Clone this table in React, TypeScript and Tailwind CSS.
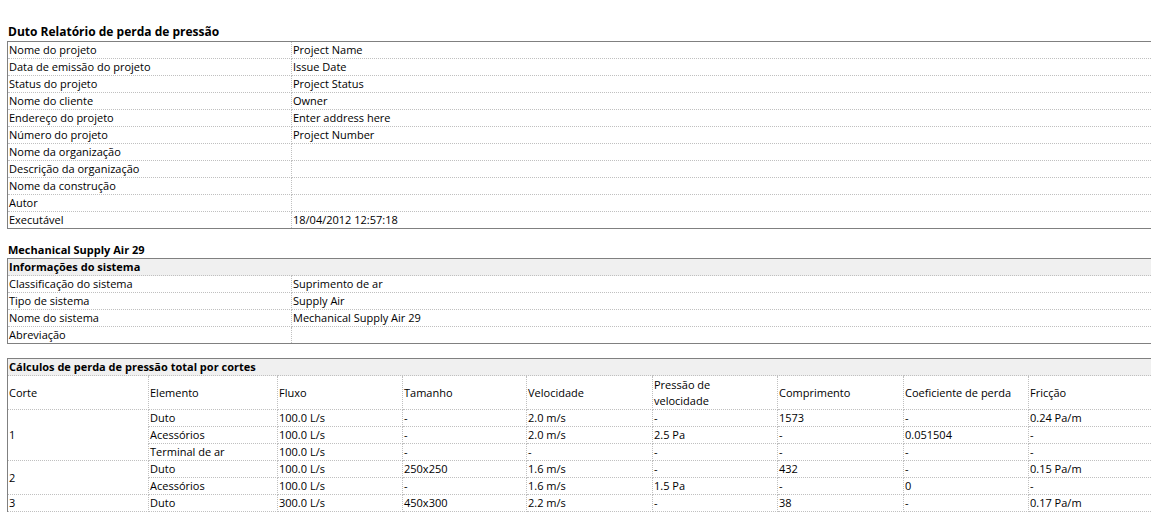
const projectRows: [string, string][] = [
  ['Nome do projeto', 'Project Name'],
  ['Data de emissão do projeto', 'Issue Date'],
  ['Status do projeto', 'Project Status'],
  ['Nome do cliente', 'Owner'],
  ['Endereço do projeto', 'Enter address here'],
  ['Número do projeto', 'Project Number'],
  ['Nome da organização', ''],
  ['Descrição da organização', ''],
  ['Nome da construção', ''],
  ['Autor', ''],
  ['Executável', '18/04/2012 12:57:18'],
]

const systemRows: [string, string][] = [
  ['Classificação do sistema', 'Suprimento de ar'],
  ['Tipo de sistema', 'Supply Air'],
  ['Nome do sistema', 'Mechanical Supply Air 29'],
  ['Abreviação', ''],
]

type Section = { corte: string; rows: string[][] }

const sections: Section[] = [
  {
    corte: '1',
    rows: [
      ['Duto', '100.0 L/s', '-', '2.0 m/s', '-', '1573', '-', '0.24 Pa/m'],
      ['Acessórios', '100.0 L/s', '-', '2.0 m/s', '2.5 Pa', '-', '0.051504', '-'],
      ['Terminal de ar', '100.0 L/s', '-', '-', '-', '-', '-', '-'],
    ],
  },
  {
    corte: '2',
    rows: [
      ['Duto', '100.0 L/s', '250x250', '1.6 m/s', '-', '432', '-', '0.15 Pa/m'],
      ['Acessórios', '100.0 L/s', '-', '1.6 m/s', '1.5 Pa', '-', '0', '-'],
    ],
  },
  {
    corte: '3',
    rows: [['Duto', '300.0 L/s', '450x300', '2.2 m/s', '-', '38', '-', '0.17 Pa/m']],
  },
]

// Revit-style report: solid grey frame on top/left/bottom, dotted grid inside
const frame = 'table-fixed border-collapse border-t border-l border-solid border-[#808080]'
const cell = 'h-[17px] border border-dotted border-[#c0c0c0] px-px py-0 text-left align-middle font-normal leading-[16px]'
const head = 'h-[17px] border border-dotted border-[#c0c0c0] bg-[#f0f0f0] px-px py-0 text-left font-bold leading-[16px]'

function KeyValueTable({ rows, title }: { rows: [string, string][]; title?: string }) {
  return (
    <table className={`${frame} w-[1160px] border-b`}>
      <colgroup>
        <col className="w-[284px]" />
        <col />
      </colgroup>
      <tbody>
        {title && (
          <tr>
            <td colSpan={2} className={head}>
              {title}
            </td>
          </tr>
        )}
        {rows.map(([k, v]) => (
          <tr key={k}>
            <td className={cell}>{k}</td>
            <td className={cell}>{v}</td>
          </tr>
        ))}
      </tbody>
    </table>
  )
}

export default function App() {
  return (
    <div className="h-[517px] w-[1151px] overflow-hidden bg-white pl-[7px] pt-[24px] text-[11px] text-black [font-family:'Open_Sans',sans-serif]">
      <h1 className="pl-px text-[12px] font-bold leading-[16px]">Duto Relatório de perda de pressão</h1>
      <div className="mt-px">
        <KeyValueTable rows={projectRows} />
      </div>

      <h2 className="mt-[13px] pl-px text-[11px] font-bold leading-[16px]">Mechanical Supply Air 29</h2>
      <KeyValueTable rows={systemRows} title="Informações do sistema" />

      {/* cut off by the window, so no bottom frame */}
      <table className={`${frame} mt-[14px] w-[1270px]`}>
        <colgroup>
          <col className="w-[141px]" />
          <col className="w-[129px]" />
          <col className="w-[125px]" />
          <col className="w-[124px]" />
          <col className="w-[126px]" />
          <col className="w-[125px]" />
          <col className="w-[126px]" />
          <col className="w-[125px]" />
          <col />
        </colgroup>
        <tbody>
          <tr>
            <td colSpan={9} className={head}>
              Cálculos de perda de pressão total por cortes
            </td>
          </tr>
          <tr>
            {['Corte', 'Elemento', 'Fluxo', 'Tamanho', 'Velocidade'].map((h) => (
              <th key={h} className={`${cell} h-[34px]`}>
                {h}
              </th>
            ))}
            <th className={`${cell} h-[34px] leading-[14px]`}>
              Pressão de
              <br />
              velocidade
            </th>
            {['Comprimento', 'Coeficiente de perda', 'Fricção'].map((h) => (
              <th key={h} className={`${cell} h-[34px]`}>
                {h}
              </th>
            ))}
          </tr>
          {sections.map((s) =>
            s.rows.map((r, i) => (
              <tr key={s.corte + i}>
                {i === 0 && (
                  <td rowSpan={s.rows.length} className={cell}>
                    {s.corte}
                  </td>
                )}
                {r.map((v, j) => (
                  <td key={j} className={cell}>
                    {v}
                  </td>
                ))}
              </tr>
            )),
          )}
        </tbody>
      </table>
    </div>
  )
}
